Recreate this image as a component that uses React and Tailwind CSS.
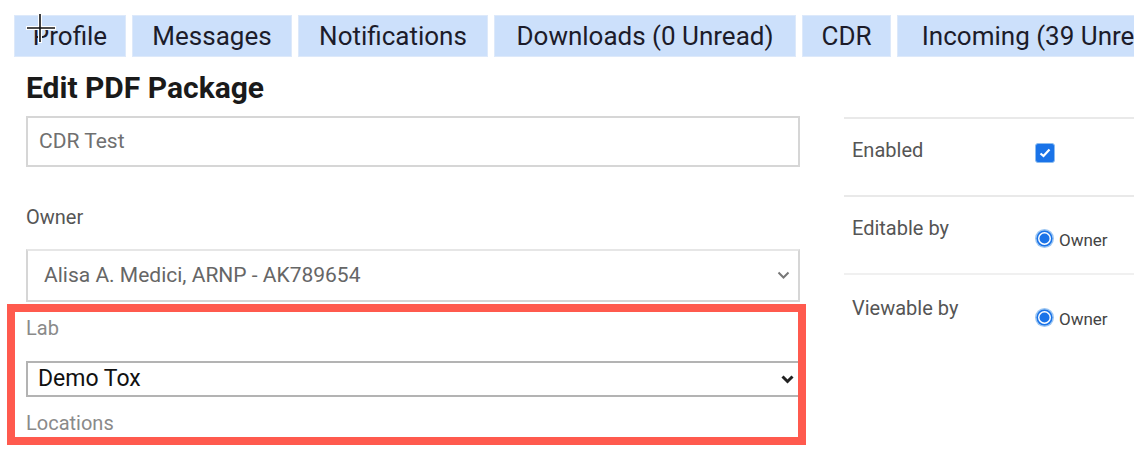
import React from "react";

const tabs = [
  { label: "Profile", w: "w-[112px]" },
  { label: "Messages", w: "w-[160px]" },
  { label: "Notifications", w: "w-[190px]" },
  { label: "Downloads (0 Unread)", w: "w-[302px]" },
  { label: "CDR", w: "w-[89px]" },
  { label: "Incoming (39 Unread)", w: "w-[300px]" },
];

const Chevron = ({ color = "#666", bold = false }) => (
  <svg width="13" height="9" viewBox="0 0 13 9" className="shrink-0">
    <path
      d="M1.5 1.5 L6.5 6.5 L11.5 1.5"
      fill="none"
      stroke={color}
      strokeWidth={bold ? 3 : 2}
    />
  </svg>
);

const Radio = () => (
  <svg width="21" height="21" viewBox="0 0 21 21" className="shrink-0">
    <circle cx="10.5" cy="10.5" r="9.5" fill="#9cc6f2" />
    <circle cx="10.5" cy="10.5" r="8" fill="#1a73e8" />
    <circle cx="10.5" cy="10.5" r="6.5" fill="#fff" />
    <circle cx="10.5" cy="10.5" r="5" fill="#1a73e8" />
  </svg>
);

const App = () => {
  return (
    <div className="relative w-[1134px] h-[452px] overflow-hidden bg-white font-['Roboto','Liberation_Sans',sans-serif]">
      {/* tab strip */}
      <div className="flex gap-[6px] pl-[14px] pt-[15px] whitespace-nowrap">
        {tabs.map((t) => (
          <div
            key={t.label}
            className={`${t.w} h-[42px] shrink-0 flex items-center justify-center bg-[#cce0fb] border border-[#dde9fa] text-[26px] leading-none text-[#1c1c2a]`}
          >
            {t.label}
          </div>
        ))}
      </div>

      <div className="flex pl-[26px]">
        {/* left form */}
        <div className="w-[774px] shrink-0">
          <h1 className="mt-[14px] h-[34px] text-[30px] leading-[34px] font-bold text-[#1a1a1a]">
            Edit PDF Package
          </h1>

          <div className="mt-[11px] h-[51px] border-2 border-[#d6d6d6] flex items-center pl-[11px] text-[21px] text-[#707070]">
            CDR Test
          </div>

          <div className="mt-[38px] h-[24px] leading-[24px] text-[20px] text-[#555]">
            Owner
          </div>

          <div className="mt-[20px] h-[53px] border-2 border-[#d6d6d6] border-t-[#e6e6e6] flex items-center justify-between pl-[16px] pr-[8px] text-[21px] text-[#666]">
            <span>Alisa A. Medici, ARNP - AK789654</span>
            <Chevron color="#777" />
          </div>

          {/* highlighted lab section */}
          <div className="relative z-10 mt-[2px] -ml-[19px] w-[799px] border-[8px] border-[#ff5a4e] pl-[11px] pt-[4px] pb-[2px]">
            <div className="h-[24px] leading-[24px] text-[20px] text-[#8a8a8a]">Lab</div>
            <div className="mt-[21px] h-[36px] border-y-2 border-l-2 border-[#b3b3b3] flex items-center justify-between pl-[10px] pr-[4px] text-[23px] text-[#111]">
              <span>Demo Tox</span>
              <Chevron color="#222" bold />
            </div>
            <div className="mt-[14px] h-[24px] leading-[24px] text-[20px] text-[#8a8a8a]">
              Locations
            </div>
          </div>
        </div>

        {/* right settings */}
        <div className="ml-[44px] mt-[60px] flex-1 text-[20px] text-[#555]">
          <div className="h-[78px] border-t-2 border-[#e9e9e9] flex items-start pl-[8px]">
            <span className="mt-[19px] w-[183px] leading-[24px]">Enabled</span>
            <div className="mt-[24px] w-[20px] h-[20px] rounded-[3px] bg-[#1a73e8] border border-[#8dbdf0] flex items-center justify-center">
              <svg width="12" height="10" viewBox="0 0 12 10">
                <path d="M1.5 5.5 L4.5 8 L10.5 1.5" fill="none" stroke="#fff" strokeWidth="2.2" />
              </svg>
            </div>
          </div>

          <div className="h-[78px] border-t-2 border-[#e9e9e9] flex items-start pl-[8px]">
            <span className="mt-[19px] w-[182px] leading-[24px]">Editable by</span>
            <div className="mt-[27px] flex items-center gap-[4px] text-[17px] text-[#444]">
              <Radio />
              <span className="mt-[4px]">Owner</span>
            </div>
          </div>

          <div className="h-[78px] border-t-2 border-[#f0f0f0] flex items-start pl-[8px]">
            <span className="mt-[21px] w-[182px] leading-[24px]">Viewable by</span>
            <div className="mt-[28px] flex items-center gap-[4px] text-[17px] text-[#444]">
              <Radio />
              <span className="mt-[4px]">Owner</span>
            </div>
          </div>
        </div>
      </div>

      {/* mouse cursor captured in the screenshot */}
      <svg
        width="32"
        height="32"
        viewBox="0 0 32 32"
        className="absolute left-[25px] top-[12px] pointer-events-none"
      >
        <path d="M15 1 V31 M1 16 H31" stroke="#fff" strokeWidth="4" />
        <path d="M15 2 V30 M2 16 H30" stroke="#111" strokeWidth="1.6" />
      </svg>
    </div>
  );
};

export default App;
